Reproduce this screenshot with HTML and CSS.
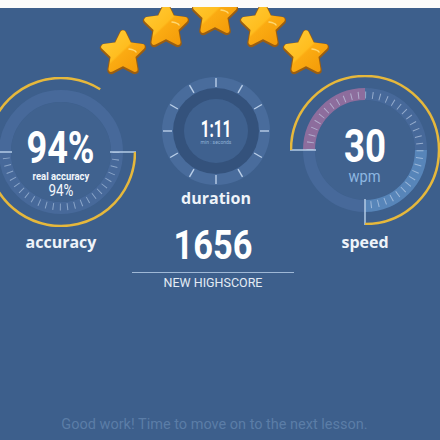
FILE: index.html
```html
<!DOCTYPE html>
<html lang="en">
<head>
<meta charset="utf-8">
<title>Lesson result</title>
<link rel="stylesheet" href="styles.css">
</head>
<body>
<div class="screen">
  <div class="topbar"></div>
  <svg class="stars" width="440" height="70" viewBox="0 0 440 70">
    <defs>
      <linearGradient id="starfill" x1="0" y1="0" x2="1" y2="1">
        <stop offset="0" stop-color="#ffcb36"/>
        <stop offset="0.48" stop-color="#ffbd1f"/>
        <stop offset="0.52" stop-color="#fbab12"/>
        <stop offset="1" stop-color="#f39a08"/>
      </linearGradient>
      <g id="star">
        <polygon points="0,-20 5.88,-8.09 19.02,-6.18 9.51,3.09 11.76,16.18 0,10 -11.76,16.18 -9.51,3.09 -19.02,-6.18 -5.88,-8.09" fill="#9a5e12" stroke="#9a5e12" stroke-width="8" stroke-linejoin="round" transform="translate(0 1)"/>
        <polygon points="0,-20 5.88,-8.09 19.02,-6.18 9.51,3.09 11.76,16.18 0,10 -11.76,16.18 -9.51,3.09 -19.02,-6.18 -5.88,-8.09" fill="url(#starfill)" stroke="url(#starfill)" stroke-width="5.5" stroke-linejoin="round"/>
        <path d="M6 -4 Q12 -3 13 -1" stroke="#ffe38a" stroke-width="1.5" fill="none" stroke-linecap="round" opacity="0.8"/>
      </g>
    </defs>
    <use href="#star" x="123" y="46"/>
    <use href="#star" x="166" y="19"/>
    <use href="#star" x="215" y="7"/>
    <use href="#star" x="263" y="19"/>
    <use href="#star" x="306" y="46"/>
  </svg>

  <div class="gauges">
    <div class="gauge">
      <div class="dial dial-big">
        <svg width="150" height="150" viewBox="0 0 150 150">
          <circle cx="75" cy="75" r="56" fill="none" stroke="#47699a" stroke-width="12"/>
          <circle cx="75" cy="75" r="50" fill="#40628f"/>
          <path d="M130 75 A55 55 0 0 1 20 75" fill="none" stroke="#b7cde8" stroke-opacity="0.6" stroke-width="7" stroke-dasharray="1 6.2"/>
          <line x1="124" y1="75" x2="150" y2="75" stroke="#b3cbe6" stroke-width="1.5"/>
          <line x1="0" y1="75" x2="26" y2="75" stroke="#b3cbe6" stroke-width="1.5"/>
          <path d="M149 75 A74 74 0 1 1 114.2 12.2" fill="none" stroke="#e6b83c" stroke-width="2.5"/>
        </svg>
        <div class="dial-text acc-text">
          <div class="num-big">94%</div>
          <div class="acc-sub">real accuracy</div>
          <div class="acc-val">94%</div>
        </div>
      </div>
      <div class="label label-side">accuracy</div>
    </div>

    <div class="gauge gauge-mid">
      <div class="dial dial-dur">
        <svg width="108" height="108" viewBox="0 0 108 108">
          <circle cx="54" cy="54" r="54" fill="#496c9c"/>
          <circle cx="54" cy="54" r="43" fill="#34527c"/>
          <circle cx="54" cy="54" r="32" fill="#3f618f"/>
          <g stroke="#b9cee8" stroke-width="1.4">
            <line x1="54" y1="1" x2="54" y2="10"/>
            <line x1="54" y1="1" x2="54" y2="10" transform="rotate(30 54 54)"/>
            <line x1="54" y1="1" x2="54" y2="10" transform="rotate(60 54 54)"/>
            <line x1="54" y1="1" x2="54" y2="10" transform="rotate(90 54 54)"/>
            <line x1="54" y1="1" x2="54" y2="10" transform="rotate(120 54 54)"/>
            <line x1="54" y1="1" x2="54" y2="10" transform="rotate(150 54 54)"/>
            <line x1="54" y1="1" x2="54" y2="10" transform="rotate(180 54 54)"/>
            <line x1="54" y1="1" x2="54" y2="10" transform="rotate(210 54 54)"/>
            <line x1="54" y1="1" x2="54" y2="10" transform="rotate(240 54 54)"/>
            <line x1="54" y1="1" x2="54" y2="10" transform="rotate(270 54 54)"/>
            <line x1="54" y1="1" x2="54" y2="10" transform="rotate(300 54 54)"/>
            <line x1="54" y1="1" x2="54" y2="10" transform="rotate(330 54 54)"/>
          </g>
        </svg>
        <div class="dial-text dur-text">
          <div class="num-dur">1:11</div>
          <div class="dur-sub">min : seconds</div>
        </div>
      </div>
      <div class="label label-dur">duration</div>
      <div class="score">1656</div>
      <div class="rule"></div>
      <div class="caption">NEW HIGHSCORE</div>
    </div>

    <div class="gauge">
      <div class="dial dial-big dial-speed">
        <svg width="150" height="150" viewBox="0 0 150 150">
          <circle cx="75" cy="75" r="50" fill="#40628f"/>
          <path d="M19 75 A56 56 0 0 1 75 19" fill="none" stroke="#8d6d9d" stroke-width="12"/>
          <path d="M75 19 A56 56 0 0 1 131 75" fill="none" stroke="#47699a" stroke-width="12"/>
          <path d="M131 75 A56 56 0 0 1 75 131" fill="none" stroke="#5785b9" stroke-width="12"/>
          <path d="M75 131 A56 56 0 0 1 19 75" fill="none" stroke="#47699a" stroke-width="12"/>
          <path d="M20 75 A55 55 0 1 1 75 130" fill="none" stroke="#c9d8ee" stroke-opacity="0.6" stroke-width="7" stroke-dasharray="1 6.2"/>
          <line x1="0" y1="75" x2="26" y2="75" stroke="#b3cbe6" stroke-width="1.5"/>
          <line x1="75" y1="124" x2="75" y2="150" stroke="#b3cbe6" stroke-width="1.5"/>
          <path d="M1 75 A74 74 0 1 1 75 149" fill="none" stroke="#e6b83c" stroke-width="2.5"/>
        </svg>
        <div class="dial-text speed-text">
          <div class="num-speed">30</div>
          <div class="unit">wpm</div>
        </div>
      </div>
      <div class="label label-speed">speed</div>
    </div>
  </div>

  <p class="message">Good work! Time to move on to the next lesson.</p>
</div>
</body>
</html>
```

FILE: styles.css
```css
html, body {
  margin: 0;
  padding: 0;
}

body {
  background: #3d5f8c;
  overflow: hidden;
  font-family: "Open Sans", "DejaVu Sans", sans-serif;
}

.screen {
  width: 440px;
  height: 440px;
  display: flex;
  flex-direction: column;
  overflow: hidden;
}

.topbar {
  height: 8px;
  background: #fbfbfb;
  flex: none;
}

.stars {
  display: block;
  flex: none;
  margin-top: -1px;
}

.gauges {
  display: grid;
  grid-template-columns: 150px 154px 150px;
  margin-left: -14px;
  flex: none;
}

.gauge {
  display: flex;
  flex-direction: column;
  align-items: center;
}

.dial {
  display: grid;
}

.dial > svg,
.dial > .dial-text {
  grid-area: 1 / 1;
}

.dial svg {
  display: block;
}

.dial-text {
  display: flex;
  flex-direction: column;
  align-items: center;
  align-self: start;
  color: #ffffff;
  font-family: "Roboto", sans-serif;
  font-weight: 700;
}

.dial-speed {
  margin-top: -2px;
}

.acc-text {
  margin-top: 49px;
}

.num-big {
  font-size: 44px;
  line-height: 44px;
  transform: scaleX(0.82);
}

.acc-sub {
  font-size: 11px;
  line-height: 13px;
  color: #f2f6fb;
  transform: scaleX(0.86);
}

.acc-val {
  font-size: 16px;
  line-height: 16px;
  font-weight: 400;
  color: #f2f6fb;
  transform: scaleX(0.84);
}

.dial-dur {
  margin-left: 6px;
}

.dur-text {
  margin-top: 40px;
}

.num-dur {
  font-size: 24px;
  line-height: 24px;
  transform: scaleX(0.64);
}

.dur-sub {
  font-size: 5px;
  line-height: 6px;
  margin-top: -2px;
  font-weight: 400;
  color: #8fb1d6;
}

.speed-text {
  margin-top: 47px;
}

.num-speed {
  font-size: 47px;
  line-height: 47px;
  transform: scaleX(0.78);
}

.unit {
  font-size: 17px;
  line-height: 17px;
  margin-top: -1px;
  font-weight: 400;
  color: #8db6e0;
  transform: scaleX(0.86);
}

.label {
  font-size: 16px;
  line-height: 20px;
  font-weight: 700;
  color: #eef3f9;
}

.label-side {
  margin-top: 5px;
}

.label-speed {
  margin-top: 7px;
}

.label-dur {
  margin-top: 3px;
  margin-left: 6px;
}

.score {
  margin-top: 18px;
  font-family: "Roboto", sans-serif;
  font-weight: 700;
  font-size: 40px;
  line-height: 40px;
  color: #ffffff;
  transform: scaleX(0.86);
}

.rule {
  width: 162px;
  height: 1px;
  margin-top: 6px;
  background: #9fb8d6;
  flex: none;
}

.caption {
  margin-top: 2px;
  font-family: "Roboto", sans-serif;
  font-size: 12.5px;
  line-height: 16px;
  color: #e3ebf4;
}

.message {
  margin: auto 0 5px;
  padding-right: 11px;
  text-align: center;
  font-family: "Roboto", sans-serif;
  font-size: 14.5px;
  line-height: 20px;
  color: #5b7da7;
}
```
